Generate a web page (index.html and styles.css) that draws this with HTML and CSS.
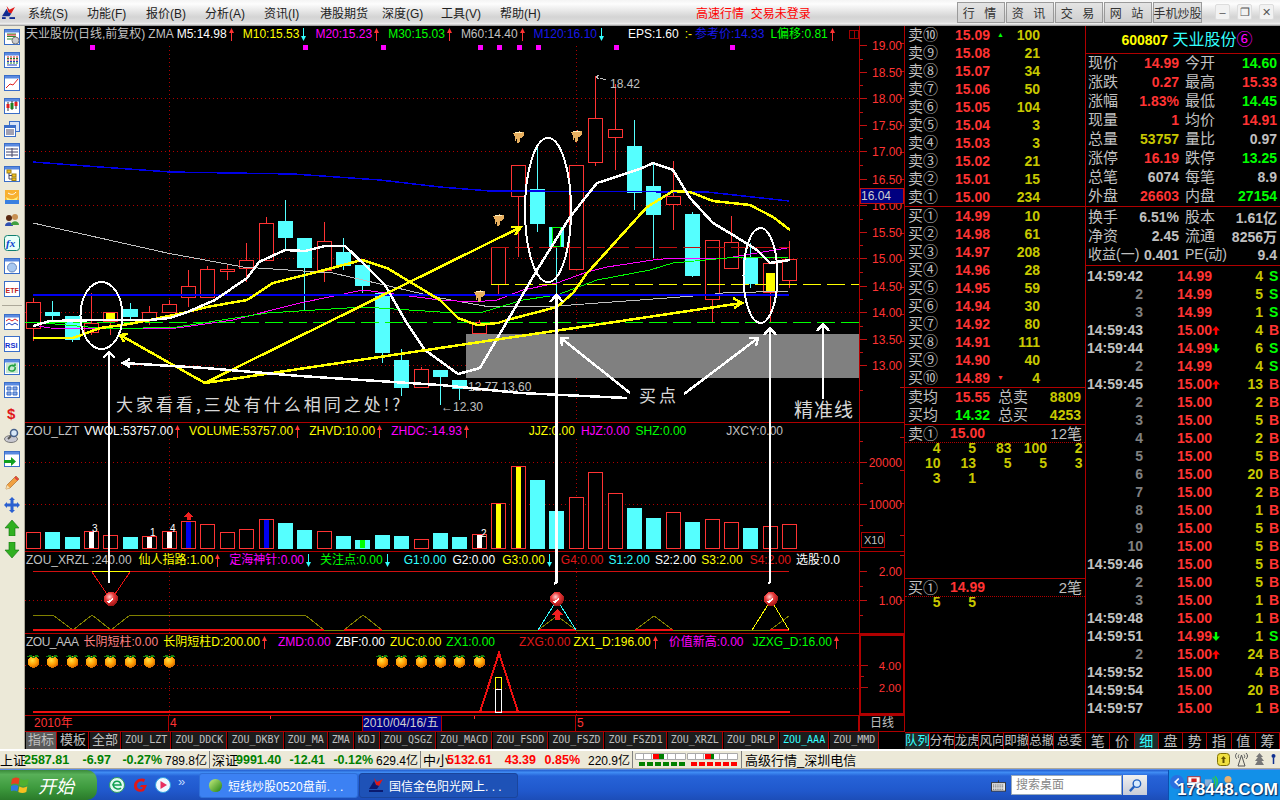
FILE: index.html
```html
<!DOCTYPE html>
<html lang="zh">
<head>
<meta charset="utf-8">
<title>天业股份</title>
<link rel="stylesheet" href="styles.css">
</head>
<body>
<svg class="sprite" aria-hidden="true">
  <defs>
    <radialGradient id="ballG" cx=".4" cy=".35" r=".7"><stop offset="0" stop-color="#ffd0d0"/><stop offset=".45" stop-color="#e83838"/><stop offset="1" stop-color="#901010"/></radialGradient>
    <radialGradient id="orangeG" cx=".4" cy=".35" r=".7"><stop offset="0" stop-color="#ffe040"/><stop offset=".6" stop-color="#ff9a00"/><stop offset="1" stop-color="#c86000"/></radialGradient>
    <linearGradient id="sphereG" x1="0" y1="0" x2="1" y2="1"><stop offset="0" stop-color="#c8f080"/><stop offset="1" stop-color="#208010"/></linearGradient>
    <symbol id="up" viewBox="0 0 5 13"><path d="M2.5 13V3" stroke="#f33" fill="none"/><path d="M0 5 2.500 0 5 5z" fill="#f33"/></symbol>
    <symbol id="dn" viewBox="0 0 5 13"><path d="M2.500 0V10" stroke="#3ff" fill="none"/><path d="M0 8 2.500 13 5 8z" fill="#3ff"/></symbol>
    <symbol id="tu" viewBox="0 0 8 9"><path d="M4 0 8 4.500H5.200V9H2.800V4.500H0z" fill="#f00"/></symbol>
    <symbol id="td" viewBox="0 0 8 9"><path d="M4 9 8 4.500H5.200V0H2.800V4.500H0z" fill="#0f0"/></symbol>
    <symbol id="hand" viewBox="0 0 11 12"><path d="M0 2.500C2 0 9 0 11 1.500L11 5 8.500 7 7 7 6.500 11.500 4.500 12 4 7 2.500 9.500 1.500 5.500z" fill="#e8b060"/><path d="M2 2 9 1.800" stroke="#fff0c0" fill="none"/></symbol>
    <symbol id="ball" viewBox="0 0 14 14"><circle cx="7" cy="7" r="7" fill="url(#ballG)"/><path d="M3 9C6 9 8 7 10 4 9 8 7 11 4 11z" fill="#fff"/></symbol>
    <symbol id="orange" viewBox="0 0 13 14"><circle cx="6.500" cy="8" r="5.800" fill="url(#orangeG)"/><path d="M.5 2.500C3.500 0 5.500 .5 6.500 3.500 8.500 .5 10.500 0 12.500 2.500 9.500 2.500 8.500 3.500 6.500 4 4.500 3.500 2.500 2.500 .5 2.500z" fill="#108010"/></symbol>
    <symbol id="moni" viewBox="0 0 16 16"><rect x=".5" y=".5" width="15" height="15" fill="#fff" stroke="#3a6ec8"/><rect x="1" y="1" width="14" height="2.500" fill="#5a8ae0"/></symbol>
  </defs>
</svg>

<header class="topbar">
  <svg class="logo" viewBox="0 0 16 14"><path d="M6 0 9 4 15 1 11 8 8 7z" fill="#e01818"/><path d="M1 11 6 3 8 7 11 8 9 11z" fill="#102a90"/><rect x="1" y="12" width="4" height="2" fill="#102a90"/><rect x="9" y="12" width="6" height="2" fill="#102a90"/></svg>
  <nav class="menu">
    <span class="m1">系统(S)</span><span class="m1">功能(F)</span><span class="m1">报价(B)</span><span class="m1">分析(A)</span><span class="m1">资讯(I)</span><span class="m2">港股期货</span><span class="m1">深度(G)</span><span class="m1">工具(V)</span><span class="m1">帮助(H)</span>
  </nav>
  <div class="top-status">高速行情&nbsp; 交易未登录</div>
  <div class="top-btns">
    <span class="tbtn wide">行 情</span><span class="tbtn wide">资 讯</span><span class="tbtn wide">交 易</span><span class="tbtn wide">网 站</span><span class="tbtn">手机炒股</span>
  </div>
  <div class="winbtns">
    <span class="wbtn">–</span><span class="wbtn">❐</span><span class="wbtn">✕</span>
  </div>
</header>

<main class="main">
  <aside class="tools">
    <svg class="ic" viewBox="0 0 16 16"><use href="#moni"/><path d="M3 5h9M3 7.500h9M3 10h5" stroke="#2a8a2a"/><path d="M3 6h9" stroke="#e02020"/><circle cx="11.500" cy="11.500" r="3.500" fill="#ccc" stroke="#777"/></svg>
    <svg class="ic" viewBox="0 0 16 16"><use href="#moni"/><path d="M3 5h2m1 0h2m1 0h2m1 0h2M3 8h2m1 0h2m1 0h2m1 0h2" stroke="#d02020" stroke-width="1"/><path d="M3 6.500h2m1 0h2m1 0h2m1 0h2M3 11h2m1 0h2m1 0h2m1 0h2" stroke="#208020"/><path d="M3 9.500h2m1 0h2m1 0h2m1 0h2M3 13h10" stroke="#2040c0"/></svg>
    <svg class="ic" viewBox="0 0 16 16"><use href="#moni"/><path d="M2 13 6 9 9 10 14 4" stroke="#e02020" fill="none"/></svg>
    <svg class="ic" viewBox="0 0 16 16"><use href="#moni"/><path d="M4 4v9M8 3v9M12 3v8" stroke="#333"/><rect x="2.500" y="6" width="3" height="4" fill="#e02020"/><rect x="6.500" y="5" width="3" height="6" fill="#208020"/><rect x="10.500" y="4" width="3" height="4" fill="#e02020"/></svg>
    <svg class="ic" viewBox="0 0 16 16"><rect x="5.500" y=".5" width="10" height="10" fill="#d8e4f8" stroke="#3a6ec8"/><rect x=".5" y="4.500" width="11" height="11" fill="#fff" stroke="#3a6ec8"/><rect x="1" y="5" width="10" height="2" fill="#3a6ec8"/><path d="M2 9h8M2 11h8M2 13h8" stroke="#446"/></svg>
    <svg class="ic" viewBox="0 0 16 16"><use href="#moni"/><path d="M2 6h12M2 9h12M2 12h12M8 5v9" stroke="#446"/></svg>
    <svg class="ic" viewBox="0 0 16 16"><use href="#moni"/><rect x="3" y="4" width="4" height="3" fill="#f0c020" stroke="#a08010"/><rect x="8" y="8" width="4" height="3" fill="#f0c020" stroke="#a08010"/><rect x="8" y="12" width="4" height="2.500" fill="#f0c020" stroke="#a08010"/><path d="M5 7v6h3M5 9.500h3" stroke="#446" fill="none"/></svg>
    <svg class="ic" viewBox="0 0 16 16"><rect x="1" y="1" width="14" height="14" fill="#f8b030"/><rect x="1" y="11" width="14" height="4" fill="#3a80e0"/><path d="M2 8C6 11 11 11 14 7L13 11 3 11z" fill="#fff080"/><path d="M4 4C7 6 10 6 12 3" stroke="#fff" fill="none"/></svg>
    <svg class="ic" viewBox="0 0 16 16"><circle cx="5" cy="6" r="3" fill="#5a2a10"/><path d="M1 14C1 9 9 9 9 14z" fill="#3050b0"/><circle cx="11" cy="5" r="3" fill="#c89050"/><path d="M7 13C7 8 15 8 15 13z" fill="#40a040"/></svg>
    <svg class="ic" viewBox="0 0 16 16"><rect x=".5" y=".5" width="15" height="15" rx="3" fill="#e8fff8" stroke="#108070"/><text x="2" y="12" class="ic-fx">fx</text></svg>
    <svg class="ic" viewBox="0 0 16 16"><use href="#moni"/><circle cx="8" cy="9.500" r="4.500" fill="#a8c8f0" stroke="#6a8ac0"/></svg>
    <svg class="ic" viewBox="0 0 16 16"><rect x=".5" y=".5" width="15" height="15" fill="#fff" stroke="#3a6ec8"/><text x="1.500" y="11.500" class="ic-etf">ETF</text></svg>
    <div class="tool-sep"></div>
    <svg class="ic" viewBox="0 0 16 16"><use href="#moni"/><path d="M2 7 5 5 8 7 11 5 14 7" stroke="#e02020" fill="none"/><path d="M2 11 5 9 8 11 11 9 14 11" stroke="#2040c0" fill="none"/></svg>
    <svg class="ic" viewBox="0 0 16 16"><rect x=".5" y=".5" width="15" height="15" fill="#fff" stroke="#3a6ec8"/><text x="1" y="11.500" class="ic-rsi">RSI</text></svg>
    <svg class="ic" viewBox="0 0 16 16"><use href="#moni"/><rect x="2" y="4" width="12" height="10" fill="#c8e8d0"/><path d="M5 11C4 7 8 5 11 7M11 7V4.500M11 7H8.500M11 8C12 12 8 13 5 11" stroke="#20a040" stroke-width="1.500" fill="none"/></svg>
    <svg class="ic" viewBox="0 0 16 16"><use href="#moni"/><path d="M3 5h4v3H3zM9 5h4v3H9zM3 10h4v3H3zM9 10h4v3H9z" fill="#8aa8e0" stroke="#3a6ec8"/></svg>
    <svg class="ic" viewBox="0 0 16 16"><text x="3" y="14" class="ic-dollar">$</text></svg>
    <svg class="ic" viewBox="0 0 16 16"><ellipse cx="7" cy="11" rx="6.500" ry="3.500" fill="#c8c8d0" stroke="#777"/><circle cx="10" cy="5" r="3.500" fill="#d8e8f8" stroke="#46608a" stroke-width="1.500"/><path d="M7 8 4 11" stroke="#555" stroke-width="2"/></svg>
    <svg class="ic" viewBox="0 0 16 16"><use href="#moni"/><path d="M0 9h7V6l5 4.500L7 15v-3H0z" fill="#10a020"/></svg>
    <svg class="ic" viewBox="0 0 16 16"><path d="M2 15 3 11 12 2 15 5 6 14z" fill="#f0a040" stroke="#a06020" stroke-width=".6"/><path d="M2 15 3 11 6 14z" fill="#f8e0b0"/><path d="M11 3 14 6" stroke="#e04040" stroke-width="2"/></svg>
    <svg class="ic" viewBox="0 0 16 16"><path d="M8 0 11 3H9.500V6.500H13V5l3 3-3 3V9.500H9.500V13H11L8 16 5 13H6.500V9.500H3V11L0 8l3-3v1.500H6.500V3H5z" fill="#2a60d0"/></svg>
    <svg class="ic" viewBox="0 0 16 16"><path d="M8 0 15 8H11V16H5V8H1z" fill="#30b020" stroke="#107010" stroke-width=".6"/></svg>
    <svg class="ic" viewBox="0 0 16 16"><path d="M8 16 15 8H11V0H5V8H1z" fill="#30b020" stroke="#107010" stroke-width=".6"/></svg>
  </aside>

  <section class="chart">
    <div class="pane pane-price">
      <div class="plot">
        <div class="legend">
          <span class="c-gr">天业股份(日线,前复权)</span>
          <span class="c-gr ml3">ZMA</span>
          <span class="c-w ml3 it">M5:14.98<svg class="ar"><use href="#up"/></svg></span>
          <span class="c-y ml9 it">M10:15.53<svg class="ar"><use href="#dn"/></svg></span>
          <span class="c-m ml9 it">M20:15.23<svg class="ar"><use href="#up"/></svg></span>
          <span class="c-g ml9 it">M30:15.03<svg class="ar"><use href="#up"/></svg></span>
          <span class="c-gr ml9 it">M60:14.40<svg class="ar"><use href="#up"/></svg></span>
          <span class="c-bl ml9 it">M120:16.10<svg class="ar"><use href="#dn"/></svg></span>
          <span class="c-w ml24">EPS:1.60</span>
          <span class="c-y ml6">:-</span>
          <span class="c-bl ml3">参考价:14.33</span>
          <span class="c-g ml6 it">L偏移:0.81<svg class="ar"><use href="#up"/></svg></span>
          <span class="split-box"></span>
        </div>
        <svg class="canvas h380" viewBox="25 42 834 380">
          <path class="grid" d="M25 98.500H859M25 151.500H859M25 205.500H859M25 258.500H859M25 312.500H859M25 365.500H859M169.500 46V422M576.500 46V422"/>
          <rect class="shade" x="466" y="334" width="393" height="44"/>
          <path class="wick-r" d="M33.500 298V341M91.500 293V335M110.500 312V335M149.500 306V325M169.500 300V313M188.500 270V307M207.500 266V269M227.500 265V280M246.500 243V282M266.500 217V223M324.500 222V282M421.500 367V369M479.500 320V322M498.500 284V294M518.500 196V257M595.500 76V166M615.500 84V170M673.500 161V230M712.500 299V322M731.500 216V242M770.500 292V322M789.500 241V288"/>
          <path class="wick-c" d="M52.500 301V320M72.500 340V342M130.500 303V320M285.500 200V250M304.500 268V310M343.500 238V270M362.500 286V293M382.500 353V363M401.500 349V396M440.500 377V405M459.500 389V400M537.500 147V232M556.500 247V300M634.500 120V210M653.500 163V258M692.500 212V277M750.500 243V288"/>
          <path class="body-r" d="M26.500 302.500h14v26h-14zM84.500 323.500h14v9h-14zM103.500 312.500h14v9h-14zM142.500 312.500h14v7h-14zM162.500 304.500h14v8h-14zM181.500 286.500h14v11h-14zM200.500 269.500h14v28h-14zM220.500 269.500h14v2h-14zM239.500 260.500h14v8h-14zM259.500 223.500h14v37h-14zM317.500 241.500h14v29h-14zM414.500 369.500h14v18h-14zM472.500 322.500h14v11h-14zM491.500 247.500h14v37h-14zM511.500 165.500h14v31h-14zM569.500 165.500h14v104h-14zM588.500 118.500h14v44h-14zM608.500 129.500h14v8h-14zM666.500 196.500h14v8h-14zM705.500 240.500h14v59h-14zM724.500 242.500h14v26h-14zM763.500 263.500h14v29h-14zM782.500 259.500h14v21h-14z"/>
          <path class="body-c" d="M45 312h15v4H45zM65 316h15v24H65zM123 309h15v8H123zM278 221h15v17H278zM297 238h15v30H297zM336 252h15v14H336zM355 265h15v21H355zM375 293h15v60H375zM394 360h15v28H394zM433 370h15v7H433zM452 380h15v9H452zM530 189h15v35H530zM549 227h15v20H549zM627 146h15v47H627zM646 186h15v29H646zM685 214h15v62H685zM743 258h15v26H743z"/>
          <path class="fill-y" d="M106 313h9v8h-9zM766 273h9v19h-9z"/>
          <rect class="hollow-g" x="552.500" y="227.500" width="8" height="19"/>
          <path class="line-blue" d="M33 162 100 167 170 172 293 174 380 180 440 187 490 191 707 192 789 201"/>
          <path class="line-gray" d="M33 223 100 238 167 253 243 267 333 273 440 298 490 307 557 306 640 300 707 295 723 293 789 291"/>
          <path class="line-mag" d="M33 325 50 328 110 329 177 328 233 320 300 303 363 290 440 300 473 302 497 300 523 290 557 283 587 272 607 267 653 260 673 258 727 258 787 248"/>
          <path class="line-green" d="M33 322 110 329 177 327 267 313 363 307 440 312 457 313 483 312 523 300 557 295 597 280 650 270 673 263 727 258 789 257"/>
          <path class="line-hblue" d="M33 294.500H789"/>
          <path class="dash-green" d="M25 322.500H859"/>
          <path class="dash-yellow" d="M491 284.500H859"/>
          <path class="dash-red" d="M491 247.500H789"/>
          <path class="line-y" d="M33 338 73 338 100 328 123 325 150 320 183 313 207 307 247 300 273 283 317 272 362 260 387 268 440 300 458 318 477 325 498 323 507 320 557 307 573 293 587 273 590 270 647 207 673 191 690 192 713 201 750 205 773 217 790 230"/>
          <path class="line-w" d="M33 326 50 321 100 320 150 320 170 318 185 313 215 300 247 278 259 262 285 250 305 251 325 246 345 246 365 265 385 285 405 320 425 350 458 374 480 368 537 270 570 217 597 183 640 169 653 163 673 170 690 198 713 223 733 235 757 250 770 263 790 260"/>
          <path class="mark" d="M90 45h5v5h-5zM303 45h5v5h-5zM381 45h5v5h-5zM478 45h5v5h-5zM497 45h5v5h-5zM517 45h5v5h-5zM536 45h5v5h-5zM614 45h5v5h-5zM730 45h5v5h-5z"/>
          <use href="#hand" x="513" y="131" width="11" height="12"/>
          <use href="#hand" x="571" y="130" width="11" height="12"/>
          <use href="#hand" x="493" y="214" width="11" height="12"/>
          <use href="#hand" x="474" y="290" width="11" height="12"/>
          <path class="thin-gray" d="M600 78 606 80M596 77 599 75M596 77 599 79"/>
          <text x="610" y="88" class="t-gray">18.42</text>
          <text x="468" y="391" class="t-gray">12.77 13.60</text>
          <text x="441" y="411" class="t-gray">←12.30</text>
        </svg>
      </div>
      <svg class="axis" viewBox="860 26 44 396">
        <path class="tick" d="M860 45.500h7M860 72.500h7M860 98.500h7M860 125.500h7M860 151.500h7M860 179.500h7M860 205.500h7M860 232.500h7M860 258.500h7M860 286.500h7M860 312.500h7M860 339.500h7M860 365.500h7M860 59h3M860 85h3M860 112h3M860 138h3M860 165h3M860 219h3M860 245h3M860 272h3M860 299h3M860 326h3M860 352h3M860 390h3M900 43h4M900 71h4M900 98h4M900 125h4M900 152h4M900 179h4M900 233h4M900 260h4M900 287h4M900 314h4M900 341h4M900 387h4"/>
        <text x="902" y="50" class="t-axis">19.00</text>
        <text x="902" y="77" class="t-axis">18.50</text>
        <text x="902" y="103" class="t-axis">18.00</text>
        <text x="902" y="130" class="t-axis">17.50</text>
        <text x="902" y="156" class="t-axis">17.00</text>
        <text x="902" y="184" class="t-axis">16.50</text>
        <text x="902" y="210" class="t-axis">16.00</text>
        <text x="902" y="237" class="t-axis">15.50</text>
        <text x="902" y="263" class="t-axis">15.00</text>
        <text x="902" y="291" class="t-axis">14.50</text>
        <text x="902" y="317" class="t-axis">14.00</text>
        <text x="902" y="344" class="t-axis">13.50</text>
        <text x="902" y="370" class="t-axis">13.00</text>
        <rect class="cur-box" x="860.500" y="188.500" width="43" height="15"/>
        <text x="861" y="200" class="t-cur">16.04</text>
      </svg>
    </div>

    <div class="pane pane-vol">
      <div class="plot">
        <div class="legend">
          <span class="c-gr">ZOU_LZT</span>
          <span class="c-w ml5 it">VWOL:53757.00<svg class="ar"><use href="#up"/></svg></span>
          <span class="c-y ml9 it">VOLUME:53757.00<svg class="ar"><use href="#up"/></svg></span>
          <span class="c-y ml9 it">ZHVD:10.00<svg class="ar"><use href="#up"/></svg></span>
          <span class="c-m ml9 it">ZHDC:-14.93<svg class="ar"><use href="#up"/></svg></span>
          <span class="c-y ml60">JJZ:0.00</span>
          <span class="c-m ml6">HJZ:0.00</span>
          <span class="c-g ml6">SHZ:0.00</span>
          <span class="c-gr ml40">JXCY:0.00</span>
        </div>
        <svg class="canvas h112" viewBox="25 439 834 112">
          <path class="grid" d="M25 462.500H859M25 504.500H859M169.500 439V551M576.500 439V551"/>
          <path class="body-r" d="M26.500 532.500h14v16h-14zM84.500 531.500h14v17h-14zM103.500 535.500h14v13h-14zM142.500 536.500h14v12h-14zM162.500 531.500h14v17h-14zM181.500 521.500h14v27h-14zM200.500 524.500h14v24h-14zM220.500 532.500h14v16h-14zM239.500 529.500h14v19h-14zM259.500 519.500h14v29h-14zM317.500 531.500h14v17h-14zM414.500 539.500h14v9h-14zM472.500 534.500h14v14h-14zM491.500 503.500h14v45h-14zM511.500 466.500h14v82h-14zM569.500 497.500h14v51h-14zM588.500 472.500h14v76h-14zM608.500 493.500h14v55h-14zM666.500 512.500h14v36h-14zM705.500 519.500h14v29h-14zM724.500 522.500h14v26h-14zM763.500 526.500h14v22h-14zM782.500 524.500h14v24h-14z"/>
          <path class="body-c" d="M45 532h15v17H45zM65 537h15v12H65zM123 537h15v12H123zM278 523h15v26H278zM297 530h15v19H297zM336 536h15v13H336zM355 540h15v9H355zM375 535h15v14H375zM394 536h15v13H394zM433 533h15v16H433zM452 537h15v12H452zM530 480h15v69H530zM549 511h15v38H549zM627 508h15v41H627zM646 518h15v31H646zM685 522h15v27H685zM743 528h15v21H743z"/>
          <path class="fill-w" d="M89 532h5v16h-5zM147 537h5v11h-5zM167 532h5v16h-5zM477 535h5v13h-5z"/>
          <path class="fill-bl" d="M186 522h5v26h-5zM264 520h5v28h-5z"/>
          <path class="fill-y" d="M496 504h5v44h-5zM516 467h5v81h-5z"/>
          <path class="fill-g" d="M360 540h5v8h-5z"/>
          <path class="fill-r" d="M188.500 512 193 517H190.500V520H186.500V517H184z"/>
          <text x="92" y="532" class="t-small">3</text>
          <text x="150" y="536" class="t-small">1</text>
          <text x="170" y="532" class="t-small">4</text>
          <text x="481" y="537" class="t-small">2</text>
        </svg>
      </div>
      <svg class="axis" viewBox="860 423 44 128">
        <path class="tick" d="M860 462.500h7M860 504.500h7M860 483h3M860 525h3M860 441h3M900 437h4M900 470h4M900 503h4M900 535h4"/>
        <text x="902" y="467" class="t-axis">20000</text>
        <text x="902" y="509" class="t-axis">10000</text>
        <rect class="x10-box" x="861.500" y="532.500" width="23" height="15"/>
        <text x="864" y="544" class="t-x10">X10</text>
      </svg>
    </div>

    <div class="pane pane-xrzl">
      <div class="plot">
        <div class="legend">
          <span class="c-gr">ZOU_XRZL :240.00</span>
          <span class="c-y ml7 it">仙人指路:1.00<svg class="ar"><use href="#up"/></svg></span>
          <span class="c-m ml9 it">定海神针:0.00<svg class="ar"><use href="#dn"/></svg></span>
          <span class="c-g ml9 it">关注点:0.00<svg class="ar"><use href="#dn"/></svg></span>
          <span class="c-c ml14">G1:0.00</span>
          <span class="c-w ml6">G2:0.00</span>
          <span class="c-y ml7 it">G3:0.00<svg class="ar"><use href="#dn"/></svg></span>
          <span class="c-r ml9">G4:0.00</span>
          <span class="c-c ml5">S1:2.00</span>
          <span class="c-w ml5">S2:2.00</span>
          <span class="c-y ml5">S3:2.00</span>
          <span class="c-r ml7">S4:2.00</span>
          <span class="c-w ml5">选股:0.0</span>
        </div>
        <svg class="canvas h65" viewBox="25 568 834 65">
          <path class="grid" d="M25 600.500H859M169.500 568V633M576.500 568V633"/>
          <path class="red-line" d="M33 571.500H789"/>
          <path class="olive" d="M33 615 53 615 73 630 92 615 111 630 130 615 305 615 324 630 344 630 363 615 382 630 538 630 557 616 576 630 635 630 654 616 673 630 770 630 789 616"/>
          <path class="red-thick" d="M33 630H324M344 630H382M538 630H576M635 630H673M770 630H789"/>
          <path class="tri-r" d="M92 572 111 600 130 572"/>
          <path class="tri-top" d="M92 571.500H130"/>
          <path class="tri-c" d="M538 630 557 600 576 630"/>
          <path class="tri-y" d="M752 630 771 600 789 630"/>
          <use href="#ball" x="104" y="592" width="14" height="14"/>
          <use href="#ball" x="550" y="592" width="14" height="14"/>
          <use href="#ball" x="764" y="592" width="14" height="14"/>
          <path class="fill-r" d="M557 609 563 615H559.500V620H554.500V615H551z"/>
        </svg>
      </div>
      <svg class="axis" viewBox="860 552 44 81">
        <path class="tick" d="M860 571.500h7M860 600.500h7M860 586h3M860 615h3M900 555h4M900 600h4"/>
        <text x="902" y="576" class="t-axis">2.00</text>
        <text x="902" y="605" class="t-axis">1.00</text>
      </svg>
    </div>

    <div class="pane pane-aaa">
      <div class="plot">
        <div class="legend">
          <span class="c-gr tight">ZOU_AAA</span>
          <span class="c-p ml5">长阴短柱:0.00</span>
          <span class="c-y ml5 it">长阴短柱D:200.00<svg class="ar"><use href="#up"/></svg></span>
          <span class="c-m ml11">ZMD:0.00</span>
          <span class="c-w ml5">ZBF:0.00</span>
          <span class="c-y ml5">ZUC:0.00</span>
          <span class="c-g ml5">ZX1:0.00</span>
          <span class="c-r ml24">ZXG:0.00</span>
          <span class="c-y ml3 it">ZX1_D:196.00<svg class="ar"><use href="#up"/></svg></span>
          <span class="c-m ml11">价值新高:0.00</span>
          <span class="c-g ml9 it">JZXG_D:16.00<svg class="ar"><use href="#up"/></svg></span>
        </div>
        <svg class="canvas h65" viewBox="25 650 834 65">
          <path class="grid" d="M25 665.500H859M25 688.500H859M169.500 650V715M576.500 650V715"/>
          <use href="#orange" x="27" y="654" width="13" height="14"/>
          <use href="#orange" x="46" y="654" width="13" height="14"/>
          <use href="#orange" x="66" y="654" width="13" height="14"/>
          <use href="#orange" x="85" y="654" width="13" height="14"/>
          <use href="#orange" x="104" y="654" width="13" height="14"/>
          <use href="#orange" x="124" y="654" width="13" height="14"/>
          <use href="#orange" x="143" y="654" width="13" height="14"/>
          <use href="#orange" x="163" y="654" width="13" height="14"/>
          <use href="#orange" x="376" y="654" width="13" height="14"/>
          <use href="#orange" x="395" y="654" width="13" height="14"/>
          <use href="#orange" x="415" y="654" width="13" height="14"/>
          <use href="#orange" x="434" y="654" width="13" height="14"/>
          <use href="#orange" x="453" y="654" width="13" height="14"/>
          <use href="#orange" x="473" y="654" width="13" height="14"/>
          <path class="red-base" d="M33 712H790"/>
          <path class="red-tri" d="M480 712 499 653 518 712"/>
          <rect class="bar-y" x="495.500" y="677.500" width="6" height="12"/>
          <rect class="bar-w" x="495.500" y="689.500" width="6" height="23"/>
        </svg>
      </div>
      <svg class="axis axis-box" viewBox="860 634 44 81">
        <path class="tick" d="M860 665.500h7M860 688.500h7M860 677h3"/>
        <text x="902" y="670" class="t-axis">4.00</text>
        <text x="902" y="693" class="t-axis">2.00</text>
      </svg>
    </div>

    <div class="daterow">
      <span class="d1">2010年</span>
      <span class="d2">4</span>
      <span class="d3">2010/04/16/五</span>
      <span class="d4"></span>
      <span class="d5">5</span>
      <span class="d6">日线</span>
    </div>
    <div class="tabs">
      <span class="tab cj sel">指标</span><span class="tab cj blk">模板</span><span class="tab cj">全部</span>
      <span class="tab">ZOU_LZT</span><span class="tab">ZOU_DDCK</span><span class="tab">ZOU_DKBY</span><span class="tab">ZOU_MA</span><span class="tab">ZMA</span><span class="tab">KDJ</span><span class="tab">ZOU_QSGZ</span><span class="tab">ZOU_MACD</span><span class="tab">ZOU_FSDD</span><span class="tab">ZOU_FSZD</span><span class="tab">ZOU_FSZD1</span><span class="tab">ZOU_XRZL</span><span class="tab">ZOU_DRLP</span><span class="tab on">ZOU_AAA</span><span class="tab">ZOU_MMD</span>
    </div>

    <svg class="annot" viewBox="25 26 880 706">
      <ellipse class="oval" cx="101.500" cy="315.500" rx="21" ry="33.500"/>
      <ellipse class="oval" cx="548" cy="210" rx="23" ry="72"/>
      <ellipse class="oval" cx="760.500" cy="275.500" rx="17" ry="47.500"/>
      <path class="ann-y" d="M205 383 120 335M205 383 521 227M511 227 521 227 515 235M205 383 742 303M733 298 742 303 734 308"/>
      <path class="ann-y" d="M120 335 128 334M120 335 124 342"/>
      <path class="ann-w" d="M123 363 205 368 300 376 440 385 520 393 627 398M130 359 123 363 130 367"/>
      <path class="ann-w" d="M109 352V583M103 358 109 352 115 358"/>
      <path class="ann-w" d="M556.500 295V582L554 584M550 302 556.500 295 563 302"/>
      <path class="ann-w" d="M770 328V582L768 584M764 335 770 328 776 335"/>
      <path class="ann-w" d="M823 324V399M817 331 823 324 829 331"/>
      <path class="ann-w" d="M630 393 561 338M562 346 561 338 569 338"/>
      <path class="ann-w" d="M684 394 758 338M749 338 758 338 756 346"/>
      <text x="116" y="411" class="t-note">大家看看,三处有什么相同之处!?</text>
      <text x="639" y="402" class="t-buy">买点</text>
      <text x="794" y="417" class="t-line">精准线</text>
    </svg>
  </section>

  <section class="side">
    <div class="book">
      <div class="bk-rows">
        <div class="bk"><span>卖⑩</span><b class="r">15.09</b><i class="mk-g">▲</i><b class="o">100</b></div>
        <div class="bk"><span>卖⑨</span><b class="r">15.08</b><i></i><b class="o">21</b></div>
        <div class="bk"><span>卖⑧</span><b class="r">15.07</b><i></i><b class="o">34</b></div>
        <div class="bk"><span>卖⑦</span><b class="r">15.06</b><i></i><b class="o">50</b></div>
        <div class="bk"><span>卖⑥</span><b class="r">15.05</b><i></i><b class="o">104</b></div>
        <div class="bk"><span>卖⑤</span><b class="r">15.04</b><i></i><b class="o">3</b></div>
        <div class="bk"><span>卖④</span><b class="r">15.03</b><i></i><b class="o">3</b></div>
        <div class="bk"><span>卖③</span><b class="r">15.02</b><i></i><b class="o">21</b></div>
        <div class="bk"><span>卖②</span><b class="r">15.01</b><i></i><b class="o">15</b></div>
        <div class="bk"><span>卖①</span><b class="r">15.00</b><i></i><b class="o">234</b></div>
      </div>
      <div class="bk-rows">
        <div class="bk"><span>买①</span><b class="r">14.99</b><i></i><b class="o">10</b></div>
        <div class="bk"><span>买②</span><b class="r">14.98</b><i></i><b class="o">61</b></div>
        <div class="bk"><span>买③</span><b class="r">14.97</b><i></i><b class="o">208</b></div>
        <div class="bk"><span>买④</span><b class="r">14.96</b><i></i><b class="o">28</b></div>
        <div class="bk"><span>买⑤</span><b class="r">14.95</b><i></i><b class="o">59</b></div>
        <div class="bk"><span>买⑥</span><b class="r">14.94</b><i></i><b class="o">30</b></div>
        <div class="bk"><span>买⑦</span><b class="r">14.92</b><i></i><b class="o">80</b></div>
        <div class="bk"><span>买⑧</span><b class="r">14.91</b><i></i><b class="o">111</b></div>
        <div class="bk"><span>买⑨</span><b class="r">14.90</b><i></i><b class="o">40</b></div>
        <div class="bk"><span>买⑩</span><b class="r">14.89</b><i class="mk-r">▼</i><b class="o">4</b></div>
      </div>
      <div class="bk-rows">
        <div class="avg"><span>卖均</span><b class="r">15.55</b><span class="pl8">总卖</span><b class="o">8809</b></div>
        <div class="avg"><span>买均</span><b class="g">14.32</b><span class="pl8">总买</span><b class="o">4253</b></div>
      </div>
      <div class="queue q-sell">
        <div class="qhead"><span>卖①</span><b class="r">15.00</b><span class="qcount">12笔</span></div>
        <div class="qgrid">
          <b>4</b><b>5</b><b>83</b><b>100</b><b>2</b>
          <b>10</b><b>13</b><b>5</b><b>5</b><b>3</b>
          <b>3</b><b>1</b>
        </div>
      </div>
      <div class="queue q-buy">
        <div class="qhead"><span>买①</span><b class="r">14.99</b><span class="qcount">2笔</span></div>
        <div class="qgrid"><b>5</b><b>5</b></div>
      </div>
      <div class="stabs">
        <span class="stab on">队列</span><span class="stab">分布</span><span class="stab">龙虎</span><span class="stab">风向</span><span class="stab">即撤</span><span class="stab">总撤</span><span class="stab last">总委</span>
      </div>
    </div>
    <div class="quote">
      <div class="qtitle"><b class="c-y">600807</b> <span class="name">天业股份</span><span class="c-m">⑥</span></div>
      <div class="qblock b1">
        <span>现价</span><b class="r">14.99</b><span class="l2">今开</span><b class="g">14.60</b>
        <span>涨跌</span><b class="r">0.27</b><span class="l2">最高</span><b class="r">15.33</b>
        <span>涨幅</span><b class="r">1.83%</b><span class="l2">最低</span><b class="g">14.45</b>
        <span>现量</span><b class="r">1</b><span class="l2">均价</span><b class="r">14.91</b>
        <span>总量</span><b class="o">53757</b><span class="l2">量比</span><b>0.97</b>
        <span>涨停</span><b class="r">16.19</b><span class="l2">跌停</span><b class="g">13.25</b>
        <span>总笔</span><b>6074</b><span class="l2">每笔</span><b>8.9</b>
        <span>外盘</span><b class="r">26603</b><span class="l2">内盘</span><b class="g">27154</b>
      </div>
      <div class="qblock b2">
        <span>换手</span><b>6.51%</b><span class="l2">股本</span><b>1.61亿</b>
        <span>净资</span><b>2.45</b><span class="l2">流通</span><b>8256万</b>
        <span class="nw">收益(一)</span><b>0.401</b><span class="l2 nw">PE(动)</span><b>9.4</b>
      </div>
      <div class="trades">
        <div class="tr"><span class="tm">14:59:42</span><b class="r">14.99</b><i></i><b class="o">4</b><b class="g">S</b></div>
        <div class="tr"><span class="sq">2</span><b class="r">14.99</b><i></i><b class="o">5</b><b class="g">S</b></div>
        <div class="tr"><span class="sq">3</span><b class="r">14.99</b><i></i><b class="o">1</b><b class="g">S</b></div>
        <div class="tr"><span class="tm">14:59:43</span><b class="r">15.00</b><i><svg class="ta"><use href="#tu"/></svg></i><b class="o">4</b><b class="r">B</b></div>
        <div class="tr"><span class="tm">14:59:44</span><b class="r">14.99</b><i><svg class="ta"><use href="#td"/></svg></i><b class="o">6</b><b class="g">S</b></div>
        <div class="tr"><span class="sq">2</span><b class="r">14.99</b><i></i><b class="o">4</b><b class="g">S</b></div>
        <div class="tr"><span class="tm">14:59:45</span><b class="r">15.00</b><i><svg class="ta"><use href="#tu"/></svg></i><b class="o">13</b><b class="r">B</b></div>
        <div class="tr"><span class="sq">2</span><b class="r">15.00</b><i></i><b class="o">2</b><b class="r">B</b></div>
        <div class="tr"><span class="sq">3</span><b class="r">15.00</b><i></i><b class="o">5</b><b class="r">B</b></div>
        <div class="tr"><span class="sq">4</span><b class="r">15.00</b><i></i><b class="o">2</b><b class="r">B</b></div>
        <div class="tr"><span class="sq">5</span><b class="r">15.00</b><i></i><b class="o">5</b><b class="r">B</b></div>
        <div class="tr"><span class="sq">6</span><b class="r">15.00</b><i></i><b class="o">20</b><b class="r">B</b></div>
        <div class="tr"><span class="sq">7</span><b class="r">15.00</b><i></i><b class="o">2</b><b class="r">B</b></div>
        <div class="tr"><span class="sq">8</span><b class="r">15.00</b><i></i><b class="o">1</b><b class="r">B</b></div>
        <div class="tr"><span class="sq">9</span><b class="r">15.00</b><i></i><b class="o">5</b><b class="r">B</b></div>
        <div class="tr"><span class="sq">10</span><b class="r">15.00</b><i></i><b class="o">5</b><b class="r">B</b></div>
        <div class="tr"><span class="tm">14:59:46</span><b class="r">15.00</b><i></i><b class="o">5</b><b class="r">B</b></div>
        <div class="tr"><span class="sq">2</span><b class="r">15.00</b><i></i><b class="o">5</b><b class="r">B</b></div>
        <div class="tr"><span class="sq">3</span><b class="r">15.00</b><i></i><b class="o">1</b><b class="r">B</b></div>
        <div class="tr"><span class="tm">14:59:48</span><b class="r">15.00</b><i></i><b class="o">1</b><b class="r">B</b></div>
        <div class="tr"><span class="tm">14:59:51</span><b class="r">14.99</b><i><svg class="ta"><use href="#td"/></svg></i><b class="o">1</b><b class="g">S</b></div>
        <div class="tr"><span class="sq">2</span><b class="r">15.00</b><i><svg class="ta"><use href="#tu"/></svg></i><b class="o">24</b><b class="r">B</b></div>
        <div class="tr"><span class="tm">14:59:52</span><b class="r">15.00</b><i></i><b class="o">4</b><b class="r">B</b></div>
        <div class="tr"><span class="tm">14:59:54</span><b class="r">15.00</b><i></i><b class="o">20</b><b class="r">B</b></div>
        <div class="tr"><span class="tm">14:59:57</span><b class="r">15.00</b><i></i><b class="o">1</b><b class="r">B</b></div>
      </div>
      <div class="stabs">
        <span class="stab w">笔</span><span class="stab w">价</span><span class="stab w on">细</span><span class="stab w">盘</span><span class="stab w">势</span><span class="stab w">指</span><span class="stab w">值</span><span class="stab w">筹</span>
      </div>
    </div>
  </section>
</main>

<footer class="status">
  <span class="s-l w24">上证</span><b class="s-g w44">2587.81</b><b class="s-g w43 ra">-6.97</b><b class="s-g w51 ra">-0.27%</b><span class="s-n w45 ra">789.8亿</span>
  <span class="s-div"></span>
  <span class="s-l w24">深证</span><b class="s-g w45">9991.40</b><b class="s-g w44 ra">-12.41</b><b class="s-g w48 ra">-0.12%</b><span class="s-n w45 ra">629.4亿</span>
  <span class="s-div"></span>
  <span class="s-l w24">中小</span><b class="s-r w44">5132.61</b><b class="s-r w45 ra">43.39</b><b class="s-r w44 ra">0.85%</b><span class="s-n w50 ra">220.9亿</span>
  <span class="s-div"></span>
  <svg class="meter" viewBox="0 0 104 14">
    <path class="m-cell" d="M.5.500h50v6H.500zM8.500.5v6M16.500.5v6M24.500.5v6M32.500.5v6M40.500.5v6M52.500.500h50v6h-50zM60.500.5v6M68.500.5v6M76.500.5v6M84.500.5v6M92.500.5v6"/>
    <path class="m-r" d="M18 1h6v5h-6zM70 1h6v5h-6z"/>
    <path class="m-g" d="M24 1h5v5h-5zM76 1h3v5h-3zM4 9h6v4H4zM12 9h6v4h-6zM20 9h6v4h-6zM28 9h6v4h-6zM36 9h6v4h-6zM44 9h6v4h-6z"/>
    <path class="m-r2" d="M56 9h6v4h-6zM64 9h6v4h-6zM72 9h6v4h-6zM80 9h6v4h-6zM88 9h6v4h-6zM96 9h6v4h-6z"/>
  </svg>
  <span class="s-div"></span>
  <span class="s-l s-info">高级行情_深圳电信</span>
  <div class="s-icons">
    <svg class="si" viewBox="0 0 13 13"><rect x=".5" y=".5" width="12" height="12" rx="3" fill="#f0e040" stroke="#807000"/><path d="M6.500 3 9 6H7.500V10H5.500V6H4z" fill="#605000"/></svg>
    <svg class="si si-t" viewBox="0 0 13 15"><path d="M6.500 3 3 14H10z" fill="none" stroke="#555"/><path d="M2 1C0 3 0 5 2 7M11 1C13 3 13 5 11 7M4 2.500C3 4 3 5 4 6M9 2.500C10 4 10 5 9 6" stroke="#555" fill="none"/></svg>
    <svg class="si" viewBox="0 0 13 13"><path d="M6.500 0 10 4H8L11 8H8.500L11 12H2L4.500 8H2L5 4H3z" fill="#777"/></svg>
    <svg class="si si-p" viewBox="0 0 5 13"><path d="M2.500 5V11" stroke="#103090" stroke-width="1.500"/><circle cx="2.500" cy="3" r="2" fill="#103090"/></svg>
  </div>
</footer>

<div class="taskbar">
  <div class="start">
    <svg class="flag" viewBox="0 0 18 18"><path d="M1 3C4 1 6 1 8.500 2.500L7.500 8.500C5 7 3 7 0 8.500z" fill="#e84020"/><path d="M9.500 3C12 4.500 14 4.500 17.500 3L16.500 9C13.500 10.500 11 10.500 8.500 9z" fill="#50b030"/><path d="M0 10C3 8.500 5 8.500 7.300 10L6.300 15.500C4 14.200 2 14 -1 15.500z" fill="#3078e0"/><path d="M8.300 10.500C11 12 13 12 16.300 10.500L15.300 16C12.500 17.500 10 17.300 7.300 16z" fill="#f8c020"/></svg>
    <span class="start-t">开始</span>
  </div>
  <div class="quick">
    <svg class="ql" viewBox="0 0 16 16"><circle cx="8" cy="8" r="7.500" fill="#e0f8f0" stroke="#30a060"/><path d="M4 8C5 3 11 3 12 8H4C5 12 10 13 12 11" fill="none" stroke="#10a050" stroke-width="1.500"/></svg>
    <svg class="ql" viewBox="0 0 16 16"><path d="M13 2C7 0 2 4 2 9 2 14 8 16 12 14L15 8H9L8 10H11L10 12C7 13 5 11 5 8.500 5 5 9 3 12 5z" fill="#e01818"/></svg>
    <svg class="ql" viewBox="0 0 16 16"><circle cx="8" cy="8" r="7.500" fill="#f0f8ff" stroke="#30a0e0"/><path d="M5.500 4 12 8 5.500 12z" fill="#e83060"/></svg>
    <span class="chev">»</span>
  </div>
  <div class="task active">
    <svg class="tk-i" viewBox="0 0 16 16"><circle cx="8" cy="8" r="7" fill="url(#sphereG)"/></svg>
    <span>短线炒股0520盘前. . .</span>
  </div>
  <div class="task">
    <svg class="tk-i tk-l" viewBox="0 0 16 14"><path d="M6 0 9 4 15 1 11 8 8 7z" fill="#e01818"/><path d="M1 11 6 3 8 7 11 8 9 11z" fill="#0a1a70"/><rect x="1" y="12" width="14" height="2" fill="#0a1a70"/></svg>
    <span>国信金色阳光网上. . .</span>
  </div>
  <div class="task-fill"></div>
  <svg class="kbd" viewBox="0 0 16 14"><rect x=".5" y="4.500" width="15" height="9" fill="#e8e8e8" stroke="#333"/><path d="M2 7h12M2 9h12M2 11.500h12" stroke="#333" stroke-dasharray="1 1"/><path d="M8 4.500V2" stroke="#333"/></svg>
  <div class="search">搜索桌面</div>
  <div class="search-btn"><svg viewBox="0 0 16 16"><circle cx="9.500" cy="6" r="4" fill="#d8ecff" stroke="#2060c0" stroke-width="1.500"/><path d="M6.500 9 2 14" stroke="#2060c0" stroke-width="2.500"/></svg></div>
  <div class="tray">
    <svg class="tray-i" viewBox="0 0 16 16"><circle cx="8" cy="8" r="8" fill="#2a70e0"/><path d="M10 4 6 8 10 12" stroke="#fff" stroke-width="2" fill="none"/></svg>
    <svg class="tray-i" viewBox="0 0 16 16"><rect x="1" y="2" width="14" height="12" fill="#fff" stroke="#c02020"/><rect x="5" y="4" width="6" height="4" fill="#d02020"/></svg>
    <svg class="tray-i" viewBox="0 0 16 16"><rect x="1" y="5" width="8" height="8" fill="#8ab0d8"/><path d="M10 3C13 6 13 10 10 13M12.500 1.500C16 5 16 11 12.500 14.500" stroke="#30d040" fill="none" stroke-width="1.500"/></svg>
    <svg class="tray-i" viewBox="0 0 16 16"><circle cx="8" cy="5" r="4" fill="#e8b070"/><path d="M2 15C2 9 14 9 14 15z" fill="#604020"/></svg>
    <span class="wm">178448.COM</span>
  </div>
</div>
</body>
</html>
```

FILE: styles.css
```css
* { box-sizing: border-box; }
html, body { margin: 0; padding: 0; }
body {
  width: 1280px; height: 800px; overflow: hidden;
  display: flex; flex-direction: column;
  background: #000; position: relative;
  font-family: "Liberation Sans", "Noto Sans CJK SC", sans-serif;
  font-size: 12px; color: #c0c0c0;
}
.sprite { position: absolute; width: 0; height: 0; }

/* top bar */
.topbar {
  height: 26px; flex: none; display: flex; align-items: center;
  background: linear-gradient(#f4f4f4 0, #fdfdfd 15%, #d4d4d4 65%, #dcdcdc 85%, #f0f0f0 92%, #8a8a8a 100%);
}
.logo { width: 15px; height: 13px; margin: -2px 0 0 1px; flex: none; }
.menu { display: flex; margin: -2px 0 0 12px; color: #222; }
.m1 { width: 59px; }
.m2 { width: 62px; margin-left: -3px; }
.top-status { color: #f00; margin: -1px 0 0 137px; width: 145px; }
.top-btns { display: flex; gap: 1px; margin: -2px 0 0 116px; }
.tbtn {
  width: 49px; height: 21px; display: flex; align-items: center; justify-content: center;
  background: linear-gradient(#e4e4e4, #cfcfcf); border: 1px solid #9a9a9a; color: #333; white-space: nowrap; font-size: 12px;
}
.tbtn.wide { letter-spacing: 3px; width: 48px; }
.winbtns { display: flex; gap: 7px; margin: -2px 0 0 13px; }
.wbtn {
  width: 15px; height: 16px; background: #f2f2f2; border: 1px solid #ddd; border-radius: 2px;
  color: #555; font-size: 11px; line-height: 14px; text-align: center;
}

/* main */
.main { flex: none; height: 723px; display: flex; }
.tools {
  width: 25px; flex: none; background: #ece9d8; border-right: 1px solid #aca899;
  display: flex; flex-direction: column; align-items: center; gap: 6.9px; padding: 3px 1px 0 0;
}
.ic { width: 16px; height: 16px; flex: none; }
.ic-fx { font: italic bold 11px "Liberation Serif", serif; fill: #0a3fd0; }
.ic-etf { font: bold 7px "Liberation Sans", sans-serif; fill: #c02020; }
.ic-rsi { font: bold 7.5px "Liberation Sans", sans-serif; fill: #1030d0; }
.ic-dollar { font: bold 15px "Liberation Sans", sans-serif; fill: #e01818; }
.tool-sep { width: 20px; height: 1px; background: #aca899; flex: none; margin: 1px 0; }

.chart { width: 880px; flex: none; display: flex; flex-direction: column; position: relative; background: #000; }
.pane { display: flex; border-bottom: 1px solid #b00000; flex: none; }
.pane-price { height: 397px; }
.pane-vol { height: 129px; }
.pane-xrzl { height: 82px; }
.pane-aaa { height: 82px; }
.plot { width: 834px; flex: none; display: flex; flex-direction: column; }
.axis { width: 46px; flex: none; border-left: 1px solid #b00000; border-right: 1px solid #b00000; display: block; }
.axis-box { border: 2px solid #b00000; }
.canvas { display: block; width: 834px; shape-rendering: crispEdges; }
.h380 { height: 380px; }
.h112 { height: 112px; }
.h65 { height: 65px; }

.legend { height: 16px; display: flex; align-items: center; white-space: nowrap; line-height: 16px; flex: none; padding-left: 1px; }
.legend span { display: inline-flex; align-items: center; }
.tight { letter-spacing: -.5px; }
.ar { width: 5px; height: 13px; margin-left: 2px; flex: none; }
.split-box { width: 10px; height: 9px; border: 1px solid #a00000; margin-left: 14px; background: linear-gradient(90deg, transparent 4px, #a00000 4px, #a00000 5px, transparent 5px); }
.ml3 { margin-left: 3px; } .ml5 { margin-left: 5px; } .ml6 { margin-left: 6px; } .ml7 { margin-left: 7px; }
.ml9 { margin-left: 9px; } .ml11 { margin-left: 11px; } .ml14 { margin-left: 14px; } .ml24 { margin-left: 24px; }
.ml40 { margin-left: 40px; } .ml60 { margin-left: 60px; }
.c-gr { color: #c0c0c0; } .c-w { color: #fff; } .c-y { color: #ff0; } .c-m { color: #f0f; }
.c-g { color: #0f0; } .c-bl { color: #1818e8; } .c-c { color: #3ff; } .c-r { color: #e01818; } .c-p { color: #ff8080; }

.grid { stroke: #b00000; stroke-dasharray: 1 3; fill: none; }
.shade { fill: #808080; }
.wick-r { stroke: #f33; fill: none; }
.wick-c { stroke: #5ff; fill: none; }
.body-r { stroke: #f33; fill: #000; }
.body-c { fill: #5ff; }
.fill-y { fill: #ff0; } .fill-w { fill: #fff; } .fill-bl { fill: #0000f0; } .fill-g { fill: #0f0; } .fill-r { fill: #f02020; }
.hollow-g { fill: #000; stroke: #0f0; stroke-width: 1.5; }
.line-blue { stroke: #0000e8; stroke-width: 1.5; fill: none; }
.line-gray { stroke: #c0c0c0; fill: none; }
.line-mag { stroke: #f0f; fill: none; stroke-width: 1; }
.line-green { stroke: #0f0; fill: none; stroke-width: 1; }
.line-hblue { stroke: #0000f0; stroke-width: 2; fill: none; }
.dash-green { stroke: #0f0; stroke-dasharray: 18 6; stroke-width: 1.5; fill: none; }
.dash-yellow { stroke: #ff0; stroke-dasharray: 18 6; fill: none; stroke-width: 1.5; }
.dash-red { stroke: #c01010; stroke-dasharray: 18 6; fill: none; }
.line-y { stroke: #ff0; stroke-width: 2.5; fill: none; }
.line-w { stroke: #fff; stroke-width: 2.5; fill: none; }
.mark { fill: #f0f; }
.thin-gray { stroke: #c0c0c0; fill: none; }
.t-gray { font: 12px "Liberation Sans", sans-serif; fill: #c0c0c0; }
.t-small { font: 10px "Liberation Sans", sans-serif; fill: #fff; }
.tick { stroke: #c01010; fill: none; shape-rendering: crispEdges; }
.t-axis { font: 12px "Liberation Sans", sans-serif; fill: #f33; text-anchor: end; }
.cur-box { fill: #000080; stroke: #c01010; shape-rendering: crispEdges; }
.t-cur { font: 12px "Liberation Sans", sans-serif; fill: #d0d0d0; }
.x10-box { fill: none; stroke: #b00000; shape-rendering: crispEdges; }
.t-x10 { font: 11px "Liberation Sans", sans-serif; fill: #c0c0c0; }

.red-line { stroke: #d01010; fill: none; }
.olive { stroke: #808000; fill: none; }
.red-thick { stroke: #f01010; stroke-width: 2; fill: none; }
.tri-r { stroke: #f01010; fill: none; }
.tri-top { stroke: #ff0; fill: none; }
.tri-c { stroke: #3ff; fill: none; }
.tri-y { stroke: #ff0; fill: none; }
.red-base { stroke: #f01010; stroke-width: 2; fill: none; }
.red-tri { stroke: #f01010; stroke-width: 2; fill: none; }
.bar-y { stroke: #ff0; fill: none; }
.bar-w { stroke: #fff; fill: none; }

.annot { position: absolute; left: 0; top: 0; width: 880px; height: 706px; pointer-events: none; shape-rendering: crispEdges; }
.oval { fill: none; stroke: #fff; stroke-width: 2; }
.ann-y { stroke: #ff0; stroke-width: 2.5; fill: none; }
.ann-w { stroke: #fff; stroke-width: 2.5; fill: none; }
.t-note { font: 17px "Noto Sans CJK SC", sans-serif; fill: #d8d8d8; letter-spacing: 3px; }
.t-buy { font: 17px "Noto Sans CJK SC", sans-serif; fill: #d8d8d8; letter-spacing: 3px; }
.t-line { font: 19px "Noto Sans CJK SC", sans-serif; fill: #d8d8d8; letter-spacing: 1px; }

.daterow { height: 16px; flex: none; display: flex; line-height: 15px; color: #f33; border-bottom: 1px solid #b00000; }
.daterow span { display: block; border-right: 1px solid #b00000; white-space: nowrap; }
.d1 { width: 144px; padding-left: 9px; }
.d2 { width: 194px; padding-left: 1px; background: linear-gradient(#f33, #f33) no-repeat 101px 0 / 1px 3px; }
.d3 { width: 79px; background: #000080; color: #d0d0d0; padding-left: 0; }
.d4 { width: 134px; background: linear-gradient(#f33, #f33) no-repeat 32px 0 / 1px 3px; }
.d5 { width: 283px; padding-left: 1px; }
.d6 { width: 46px; color: #c0c0c0; text-align: center; border-left: 1px solid #b00000; }

.tabs { flex: none; height: 17px; display: flex; padding-left: 1px; gap: 1px; background: #000; }
.tab {
  font: 10px/16px "DejaVu Sans Mono", monospace; color: #c0c0c0; background: #1c1c1c;
  padding: 0 3px; border-right: 1px solid #b00000; white-space: nowrap;
}
.tab.cj { font: 13px/16px "Liberation Sans", "Noto Sans CJK SC", sans-serif; padding: 0 2px; }
.tab.sel { background: #5a5a5a; }
.tab.blk { background: #000; }
.tab.on { color: #3ff; }

/* side panels */
.side { flex: none; width: 375px; display: flex; background: #000; border-left: 0; }
.book { width: 181px; flex: none; display: flex; flex-direction: column; border-right: 1px solid #b00000; }
.bk-rows { border-bottom: 1px solid #b00000; flex: none; }
.bk {
  height: 18px; display: grid; grid-template-columns: 47px 35px 10px 40px;
  padding-left: 3px; align-items: center; line-height: 18px;
}
.bk span, .avg span, .qhead span { font-size: 15px; color: #c0c0c0; white-space: nowrap; }
.bk b, .avg b, .qhead b, .qblock b, .tr b { font-size: 14px; letter-spacing: 0; }
.bk .o, .avg .o { text-align: right; }
.mk-g, .mk-r { font-size: 7px; font-style: normal; padding-left: 7px; }
.mk-g { color: #0f0; } .mk-r { color: #f33; }
.r { color: #f33; } .g { color: #0f0; } .o { color: #c8c800; }
.avg { height: 18px; display: grid; grid-template-columns: 47px 35px 43px 48px; padding-left: 3px; align-items: center; line-height: 18px; }
.pl8 { padding-left: 8px; }
.queue { flex: none; border-bottom: 1px solid #b00000; }
.q-sell { height: 154px; }
.q-buy { flex: 1; border-bottom: 0; }
.qhead { height: 18px; display: grid; grid-template-columns: 42px 35px 1fr; padding: 0 3px; align-items: center; border-bottom: 1px dotted #b00000; line-height: 17px; }
.qcount { text-align: right; }
.qgrid { display: grid; grid-template-columns: repeat(5, 35.500px); line-height: 15px; margin-top: -2px; }
.qgrid b { text-align: right; color: #c8c800; font-size: 14px; }
.stabs { height: 17px; flex: none; display: flex; border-top: 1px solid #b00000; }
.stab { flex: 1 1 0; text-align: center; font-size: 12.500px; line-height: 16px; white-space: nowrap; overflow: hidden; border-right: 1px solid #b00000; }
.stab.last { border-right: 0; flex: 1.3 1 0; }
.stab.on { color: #3ff; background: #1c2c2c; }
.stab.w { font-size: 14px; }

.quote { width: 194px; flex: none; display: flex; flex-direction: column; }
.qtitle { height: 28px; border-bottom: 1px solid #b00000; text-align: center; line-height: 27px; font-size: 16px; white-space: nowrap; flex: none; padding-left: 8px; }
.qtitle b { font-size: 14px; }
.name { color: #3ff; }
.qblock {
  display: grid; grid-template-columns: 30px 61px 33px 65px; grid-auto-rows: 19px;
  padding: 0 3px 0 2px; border-bottom: 1px solid #b00000; align-items: center; flex: none;
}
.b1 { height: 154px; margin-top: -1px; }
.b2 { height: 59px; }
.qblock span { font-size: 15px; color: #c0c0c0; line-height: 19px; white-space: nowrap; }
.qblock b { text-align: right; color: #c0c0c0; white-space: nowrap; }
.qblock b.r { color: #f33; } .qblock b.g { color: #0f0; } .qblock b.o { color: #c8c800; }
.l2 { padding-left: 6px; }
.nw { font-size: 14px !important; }
.trades { flex: 1; padding-top: 1px; }
.tr { height: 18px; display: grid; grid-template-columns: 57px 69px 10px 41px 17px; align-items: center; line-height: 18px; }
.tr span { text-align: right; font-weight: bold; font-size: 14px; }
.tm { color: #c0c0c0; } .sq { color: #808080; }
.tr b:nth-of-type(1) { text-align: right; }
.tr b:nth-of-type(2) { text-align: right; }
.tr b:nth-of-type(3) { padding-left: 6px; }
.tr i { display: flex; align-items: center; height: 18px; }
.ta { width: 8px; height: 9px; flex: none; }

/* status */
.status {
  height: 20px; flex: none; background: #ece9d8; color: #000; display: flex; align-items: center;
  border-top: 2px solid #fff; border-bottom: 1px solid #aca899; white-space: nowrap; font-size: 12px;
}
.status b { font-size: 12.500px; }
.s-l { color: #000; font-size: 13px; }
.s-g { color: #008000; } .s-r { color: #f00; } .s-n { color: #000; }
.ra { text-align: right; }
.w24 { width: 24px; flex: none; } .w45 { width: 45px; flex: none; } .w43 { width: 43px; flex: none; } .w51 { width: 51px; flex: none; }
.w44 { width: 44px; flex: none; } .w48 { width: 48px; flex: none; } .w50 { width: 50px; flex: none; }
.s-div { width: 1px; height: 17px; background: #808080; margin: 0 2px; flex: none; }
.meter { width: 104px; height: 14px; flex: none; }
.m-cell { fill: #fff; stroke: #aaa; }
.m-r { fill: #f00; } .m-g { fill: #008000; } .m-r2 { fill: #f00; }
.s-info { margin-left: 1px; }
.s-icons { margin-left: auto; display: flex; gap: 5px; align-items: center; padding-right: 4px; }
.si { width: 13px; height: 13px; flex: none; }
.si-t { width: 13px; height: 15px; }
.si-p { width: 5px; }

/* taskbar */
.taskbar {
  flex: 1; display: flex; align-items: center;
  background: linear-gradient(#245ecf 0, #3f8cf3 8%, #2663d8 20%, #2058cc 70%, #1c4db8 100%);
  color: #fff; overflow: hidden; border-top: 1px solid #5a8ce8;
}
.start {
  width: 97px; height: 100%; flex: none; display: flex; align-items: center;
  background: linear-gradient(#3a8a3a, #58b058 15%, #3d9a3d 60%, #2a7a2a);
  border-radius: 0 10px 10px 0;
}
.flag { width: 18px; height: 18px; margin-left: 11px; flex: none; }
.start-t { font: italic 18px "Noto Sans CJK SC", sans-serif; color: #fff; margin-left: 9px; }
.quick { display: flex; align-items: center; gap: 7px; margin-left: 12px; width: 90px; flex: none; }
.ql { width: 16px; height: 16px; flex: none; }
.chev { color: #c0d8ff; font-size: 13px; margin: -8px 0 0 0; }
.task {
  width: 159px; height: 25px; flex: none; display: flex; align-items: center; gap: 5px; padding-left: 8px;
  background: #1e52b7; border-radius: 3px; margin-right: 1px; font-size: 12px; white-space: nowrap;
  border: 1px solid #1a459c;
}
.task.active { background: #3c81f3; border-color: #2f6fd8; }
.tk-i { width: 15px; height: 15px; flex: none; }
.tk-l { width: 16px; height: 14px; }
.task-fill { flex: 1; }
.kbd { width: 15px; height: 14px; flex: none; margin-right: 5px; }
.search { width: 111px; height: 20px; background: #fff; border: 1px solid #9ab; color: #888; line-height: 18px; padding-left: 4px; flex: none; }
.search-btn { width: 24px; height: 20px; background: linear-gradient(#f0f0f0, #c8ccd8); margin-left: 1px; flex: none; display: flex; align-items: center; justify-content: center; }
.search-btn svg { width: 15px; height: 15px; }
.tray { width: 112px; height: 100%; margin-left: 21px; flex: none; background: #1290e8; border-left: 1px solid #0a50b0; position: relative; display: flex; align-items: center; gap: 3px; padding-left: 1px; overflow: hidden; }
.tray-i { width: 14px; height: 14px; flex: none; margin-top: -6px; }
.wm { position: absolute; right: 2px; bottom: 0; font: bold 17px/20px "Liberation Sans", sans-serif; color: #fff; text-shadow: 0 0 2px #06306a, 1px 1px 1px #06306a; }
```
